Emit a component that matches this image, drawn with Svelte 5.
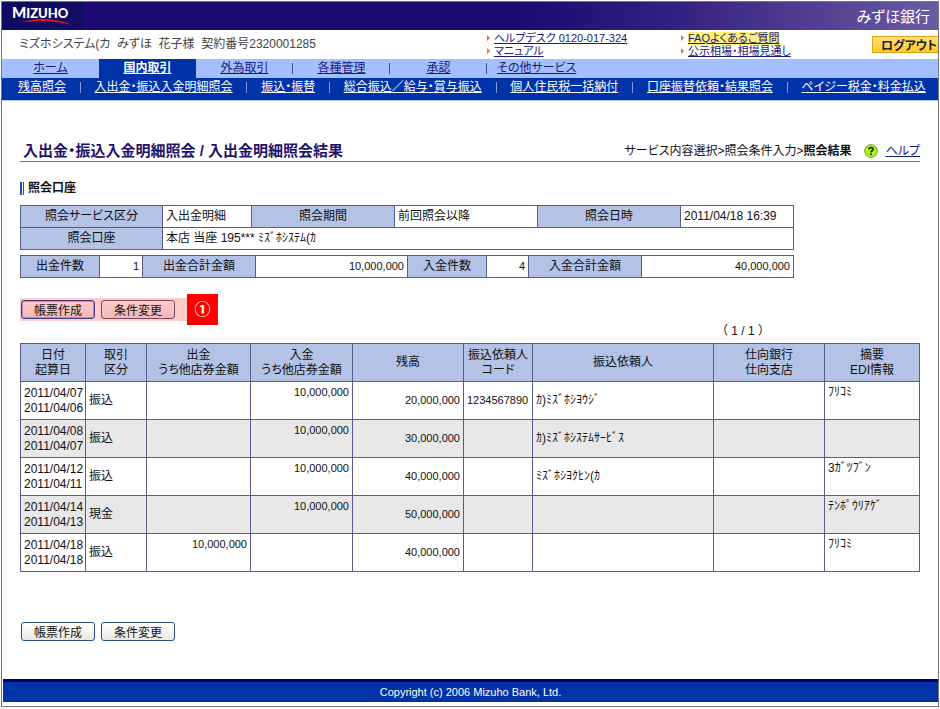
<script>
  const tabs = [
    { label: 'ホーム' },
    { label: '国内取引', active: true },
    { label: '外為取引', divider: true },
    { label: '各種管理', divider: true },
    { label: '承認', divider: true },
    { label: 'その他サービス', last: true }
  ];

  const subMenu = [
    '残高照会',
    '入出金・振込入金明細照会',
    '振込・振替',
    '総合振込／給与・賞与振込',
    '個人住民税一括納付',
    '口座振替依頼・結果照会',
    'ペイジー税金・料金払込'
  ];

  const rows = [
    { date: '2011/04/07', start: '2011/04/06', type: '振込', out: '', in: '10,000,000', balance: '20,000,000', code: '1234567890', client: 'ｶ)ﾐｽﾞﾎｼﾖｳｼﾞ', note: 'ﾌﾘｺﾐ' },
    { date: '2011/04/08', start: '2011/04/07', type: '振込', out: '', in: '10,000,000', balance: '30,000,000', code: '', client: 'ｶ)ﾐｽﾞﾎｼｽﾃﾑｻｰﾋﾞｽ', note: '' },
    { date: '2011/04/12', start: '2011/04/11', type: '振込', out: '', in: '10,000,000', balance: '40,000,000', code: '', client: 'ﾐｽﾞﾎｼﾖｸﾋﾝ(ｶ', note: '3ｶﾞﾂﾌﾞﾝ' },
    { date: '2011/04/14', start: '2011/04/13', type: '現金', out: '', in: '10,000,000', balance: '50,000,000', code: '', client: '', note: 'ﾃﾝﾎﾟｳﾘｱｹﾞ' },
    { date: '2011/04/18', start: '2011/04/18', type: '振込', out: '10,000,000', in: '', balance: '40,000,000', code: '', client: '', note: 'ﾌﾘｺﾐ' }
  ];
</script>

<div class="page">
  <header class="brand">
    <svg class="logo" viewBox="0 0 82 28" role="img" aria-label="MIZUHO">
      <rect width="82" height="28" fill="#0f0c62" />
      <text x="10" y="16" fill="#fff" font-family="Lato, sans-serif" font-weight="900" font-size="15">M<tspan font-size="13">IZUHO</tspan></text>
      <path d="M18 20.5 C34 15.5 54 15.5 70 23 C54 18.5 34 18 18 20.5 Z" fill="#e8112d" />
    </svg>
    <span class="bank">みずほ銀行</span>
  </header>

  <div class="user-bar">
    <div class="user">ミズホシステム(カ&nbsp; みずほ&nbsp; 花子様&nbsp; 契約番号2320001285</div>
    <ul class="quick">
      <li><a href="#helpdesk">ヘルプデスク 0120-017-324</a></li>
      <li><a href="#manual">マニュアル</a></li>
    </ul>
    <ul class="quick">
      <li><a href="#faq" class="marked">FAQよくあるご質問</a></li>
      <li><a href="#rates">公示相場・相場見通し</a></li>
    </ul>
    <button class="logout">ログアウト</button>
  </div>

  <nav class="tabs">
    {#each tabs as tab}
      <div class="tab" class:active={tab.active} class:divider={tab.divider} class:last={tab.last}>
        <a href="#tab">{tab.label}</a>
      </div>
    {/each}
  </nav>

  <nav class="sub-menu">
    {#each subMenu as item, i}
      {#if i > 0}<span class="bar"></span>{/if}
      <a href="#menu">{item}</a>
    {/each}
  </nav>

  <main>
    <div class="title-row">
      <h1>入出金・振込入金明細照会 / 入出金明細照会結果</h1>
      <div class="steps">
        サービス内容選択&gt;照会条件入力&gt;<b>照会結果</b>
        <svg class="help-icon" viewBox="0 0 14 14" aria-hidden="true">
          <circle cx="7" cy="7" r="6.3" fill="#b4f02a" stroke="#63a80c" />
          <path d="M4.8 5.4 C4.9 3 9.2 3 9.2 5.3 C9.2 6.7 7 6.8 7 8.4" fill="none" stroke="#1c3300" stroke-width="1.6" />
          <circle cx="7" cy="10.3" r="1" fill="#1c3300" />
        </svg>
        <a href="#help">ヘルプ</a>
      </div>
    </div>

    <h2>照会口座</h2>

    <table class="account">
      <colgroup>
        <col style="width: 142px" /><col style="width: 89px" /><col style="width: 143px" />
        <col style="width: 143px" /><col style="width: 143px" /><col />
      </colgroup>
      <tbody>
        <tr>
          <th>照会サービス区分</th><td>入出金明細</td>
          <th>照会期間</th><td>前回照会以降</td>
          <th>照会日時</th><td>2011/04/18 16:39</td>
        </tr>
        <tr>
          <th>照会口座</th>
          <td colspan="5">本店 当座 195*** ﾐｽﾞﾎｼｽﾃﾑ(ｶ</td>
        </tr>
      </tbody>
    </table>

    <table class="account totals">
      <colgroup>
        <col style="width: 79px" /><col style="width: 43px" /><col style="width: 113px" /><col style="width: 152px" />
        <col style="width: 79px" /><col style="width: 42px" /><col style="width: 113px" /><col />
      </colgroup>
      <tbody>
        <tr>
          <th>出金件数</th><td class="num">1</td>
          <th>出金合計金額</th><td class="num">10,000,000</td>
          <th>入金件数</th><td class="num">4</td>
          <th>入金合計金額</th><td class="num">40,000,000</td>
        </tr>
      </tbody>
    </table>

    <div class="actions">
      <div class="highlight">
        <button class="focus">帳票作成</button>
        <button>条件変更</button>
      </div>
      <span class="marker">①</span>
    </div>

    <p class="pager">（ 1 / 1 ）</p>

    <table class="details">
      <colgroup>
        <col style="width: 65px" /><col style="width: 61px" /><col style="width: 104px" />
        <col style="width: 102px" /><col style="width: 111px" /><col style="width: 69px" />
        <col /><col style="width: 111px" /><col style="width: 95px" />
      </colgroup>
      <thead>
        <tr>
          <th>日付<br />起算日</th>
          <th>取引<br />区分</th>
          <th>出金<br />うち他店券金額</th>
          <th>入金<br />うち他店券金額</th>
          <th>残高</th>
          <th>振込依頼人<br />コード</th>
          <th>振込依頼人</th>
          <th>仕向銀行<br />仕向支店</th>
          <th>摘要<br />EDI情報</th>
        </tr>
      </thead>
      <tbody>
        {#each rows as row}
          <tr>
            <td>{row.date}<br />{row.start}</td>
            <td>{row.type}</td>
            <td class="num top">{row.out}</td>
            <td class="num top">{row.in}</td>
            <td class="num">{row.balance}</td>
            <td class="code">{row.code}</td>
            <td>{row.client}</td>
            <td></td>
            <td class="top">{row.note}</td>
          </tr>
        {/each}
      </tbody>
    </table>

    <div class="actions bottom">
      <button>帳票作成</button>
      <button>条件変更</button>
    </div>
  </main>

  <footer>Copyright (c) 2006 Mizuho Bank, Ltd.</footer>
</div>

<style>
  :global(body) {
    background: #fff;
  }

  .page {
    margin: 1px;
    padding-bottom: 4px;
    border: 1px solid #777;
    color: #111;
    font-family: "Liberation Sans", "Noto Sans CJK JP", sans-serif;
    font-feature-settings: "palt";
    font-size: 12px;
    line-height: 15px;
    white-space: nowrap;
  }

  a {
    color: #1a1a7c;
  }

  .brand {
    display: flex;
    align-items: center;
    justify-content: space-between;
    height: 28px;
    padding-right: 8px;
    background: linear-gradient(to right, #1b0a70 55%, #33217f 72%, #6b5ba2);
  }

  .logo {
    width: 82px;
    height: 28px;
  }

  .bank {
    color: #fff;
    font-size: 15px;
  }

  .user-bar {
    display: grid;
    grid-template-columns: 485fr 194fr 191fr auto;
    align-items: center;
    height: 29px;
  }

  .user {
    padding-left: 17px;
    color: #444;
  }

  .quick {
    margin: 0;
    padding: 0;
    list-style: none;
    font-size: 11px;
    line-height: 13px;
  }

  .quick li {
    display: flex;
    align-items: center;
    gap: 4px;
  }

  .quick li::before {
    content: "";
    border: 3px solid transparent;
    border-left-color: #f07020;
    border-right-width: 0;
  }

  .marked {
    background: #fff27a;
  }

  .logout {
    height: 17px;
    padding: 0 0 0 8px;
    width: 66px;
    border: 1px solid #e0a010;
    border-right: 0;
    background: linear-gradient(#ffe27a, #ffc928);
    color: #222;
    font: bold 12px/15px "Noto Sans CJK JP", sans-serif;
    font-feature-settings: "palt";
    text-align: left;
  }

  .tabs {
    display: flex;
    height: 19px;
    background: #a4bfff;
    line-height: 18px;
    text-align: center;
  }

  .tab {
    position: relative;
    flex: 0 1 97px;
  }

  .tab.active {
    background: #0033a8;
    font-weight: bold;
  }

  .tab.active a {
    color: #fff;
  }

  .tab.divider::after {
    content: "";
    position: absolute;
    top: 4px;
    right: 0;
    width: 1px;
    height: 11px;
    background: #3355b0;
  }

  .tab.last {
    flex-basis: auto;
    padding-left: 10px;
  }

  .sub-menu {
    display: flex;
    align-items: center;
    justify-content: space-between;
    height: 22px;
    padding: 0 12px 0 16px;
    border-bottom: 1px solid #b4c8fa;
    background: #0033a8;
    line-height: 18px;
  }

  .sub-menu a {
    margin-bottom: 4px;
    color: #fff;
  }

  .bar {
    width: 1px;
    height: 11px;
    margin-bottom: 4px;
    background: #7f9be0;
  }

  main {
    padding: 40px 18px 38px;
  }

  .title-row {
    display: flex;
    align-items: center;
    justify-content: space-between;
    height: 20px;
    border-bottom: 1px solid #6f68a8;
  }

  h1 {
    margin: 0;
    padding-left: 3px;
    color: #1f1268;
    font-size: 15px;
    line-height: 20px;
  }

  .steps {
    display: flex;
    align-items: center;
  }

  .help-icon {
    width: 14px;
    height: 14px;
    margin: 0 8px 0 12px;
  }

  h2 {
    display: flex;
    align-items: center;
    gap: 4px;
    margin: 19px 0 10px;
    font-size: 12px;
    line-height: 14px;
  }

  h2::before {
    content: "";
    width: 1px;
    height: 13px;
    border: solid #2448a8;
    border-width: 0 1px 0 2px;
  }

  table {
    width: 100%;
    border-collapse: collapse;
    table-layout: fixed;
  }

  th,
  td {
    padding: 3px;
    border: 1px solid #5b5a90;
  }

  th {
    background: #b3c2e5;
    font-weight: normal;
    text-align: center;
  }

  .account {
    width: 86%;
  }

  .totals {
    margin-top: 5px;
  }

  .num {
    padding-right: 3px;
    font-size: 11px;
    text-align: right;
  }

  .code {
    font-size: 11px;
  }

  .actions {
    display: flex;
    align-items: center;
    margin-top: 16px;
  }

  .highlight {
    display: flex;
    gap: 6px;
    padding: 2px 12px 2px 1px;
    background: #ffcccc;
  }

  .actions button {
    width: 74px;
    height: 19px;
    padding: 0;
    border: 1px solid #2a4d7c;
    border-radius: 3px;
    background: linear-gradient(#fff, #e9e8e0);
    color: #111;
    font: 12px/15px "Noto Sans CJK JP", sans-serif;
  }

  .highlight button {
    border-color: #7a4860;
    background: linear-gradient(#ffcaca, #f2b8b4);
  }

  .highlight .focus {
    border-color: #4a3c80;
    box-shadow: inset 0 0 0 1px #a490c4;
  }

  .marker {
    width: 31px;
    background: #f00;
    color: #fff;
    font-size: 16px;
    font-weight: bold;
    line-height: 31px;
    text-align: center;
  }

  .pager {
    margin: 0 150px 5px 0;
    line-height: 13px;
    font-feature-settings: normal;
    text-align: right;
  }

  .details tr {
    height: 38px;
  }

  .details td.top {
    vertical-align: top;
  }

  .details tbody tr:nth-child(even) {
    background: #e8e8e8;
  }

  .bottom {
    gap: 6px;
    margin-top: 50px;
    padding-left: 1px;
  }

  footer {
    margin-left: 1px;
    border-top: 3px solid #00006e;
    background: #0033a8;
    color: #fff;
    font-size: 11px;
    line-height: 20px;
    text-align: center;
  }
</style>
